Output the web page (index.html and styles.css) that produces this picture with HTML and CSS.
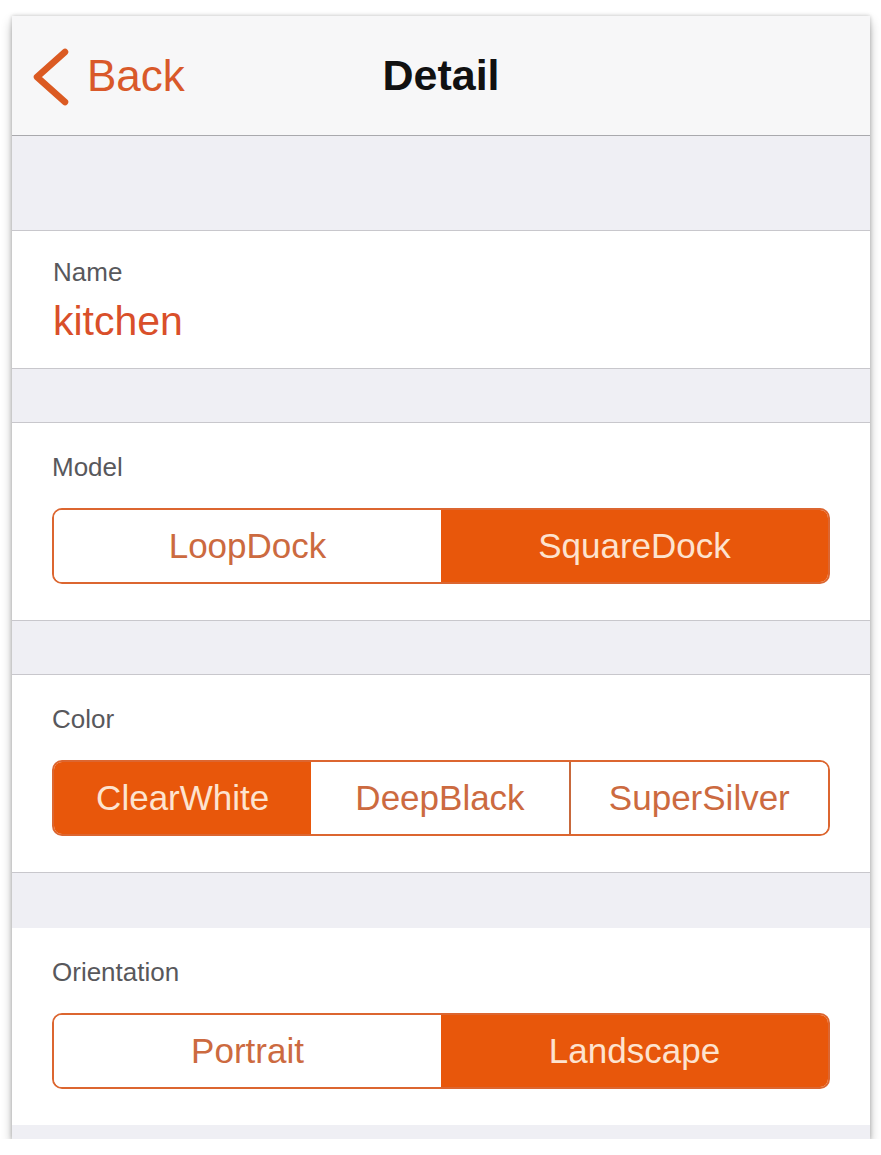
FILE: index.html
```html
<!DOCTYPE html>
<html>
<head>
<meta charset="utf-8">
<link rel="stylesheet" href="styles.css">
</head>
<body>
<div class="phone">
  <header class="navbar">
    <div class="back">
      <svg class="chevron" width="40" height="60" viewBox="0 0 40 60">
        <polyline points="33,5 5,30 33,55" fill="none" stroke="#db5a22" stroke-width="6.5" stroke-linecap="round" stroke-linejoin="round"/>
      </svg>
      <span class="back-text">Back</span>
    </div>
    <div class="title">Detail</div>
  </header>

  <div class="spacer spacer-top"></div>

  <section class="cell name-cell">
    <div class="label">Name</div>
    <div class="value">kitchen</div>
  </section>

  <div class="spacer"></div>

  <section class="cell">
    <div class="label">Model</div>
    <div class="segmented">
      <div class="seg">LoopDock</div>
      <div class="seg selected">SquareDock</div>
    </div>
  </section>

  <div class="spacer"></div>

  <section class="cell">
    <div class="label">Color</div>
    <div class="segmented">
      <div class="seg selected">ClearWhite</div>
      <div class="seg">DeepBlack</div>
      <div class="seg">SuperSilver</div>
    </div>
  </section>

  <div class="spacer spacer-nolines"></div>

  <section class="cell cell-noline">
    <div class="label">Orientation</div>
    <div class="segmented">
      <div class="seg">Portrait</div>
      <div class="seg selected">Landscape</div>
    </div>
  </section>

  <div class="spacer-bottom"></div>
</div>
</body>
</html>
```

FILE: styles.css
```css
html, body {
  margin: 0;
  padding: 0;
  background: #ffffff;
}

body {
  font-family: "Liberation Sans", Arial, Helvetica, sans-serif;
}

.phone {
  margin: 16px 11px 0 12px;
  width: 858px;
  height: 1123px;
  background: #efeff4;
  box-shadow: 0 6px 10px rgba(0, 0, 0, 0.28), 0 0 4px rgba(0, 0, 0, 0.22);
  overflow: hidden;
}

.navbar {
  height: 119px;
  background: #f7f7f8;
  border-bottom: 1px solid #a9a9ad;
  display: flex;
  align-items: center;
  position: relative;
}

.back {
  display: flex;
  align-items: center;
  padding-left: 20px;
  color: #d9592a;
  height: 100%;
}

.chevron {
  display: block;
  margin-top: 2px;
}

.back-text {
  font-size: 44px;
  margin-left: 15px;
  margin-top: 0;
}

.title {
  position: absolute;
  left: 0;
  right: 0;
  top: 0;
  bottom: 0;
  display: flex;
  align-items: center;
  justify-content: center;
  font-size: 43px;
  font-weight: bold;
  color: #111;
  margin-top: 0;
  pointer-events: none;
}

.spacer {
  height: 53px;
  background: #efeff4;
}

.spacer-top {
  height: 94px;
}

.spacer-nolines {
  height: 55px;
}

.cell {
  background: #ffffff;
  border-top: 1px solid #c8c7cc;
  border-bottom: 1px solid #c8c7cc;
  padding: 29px 40px 36px 40px;
}

.cell-noline {
  border-top: none;
  border-bottom: none;
  padding-top: 29px;
}

.name-cell {
  padding: 26px 40px 24px 41px;
}

.label {
  font-size: 26px;
  line-height: 30px;
  color: #58585c;
}

.value {
  font-size: 41px;
  line-height: 46px;
  color: #d94f2a;
  margin-top: 11px;
}

.segmented {
  margin-top: 26px;
  height: 76px;
  box-sizing: border-box;
  border: 2px solid #dc6630;
  border-radius: 10px;
  display: flex;
  overflow: hidden;
}

.seg {
  flex: 1;
  display: flex;
  align-items: center;
  justify-content: center;
  font-size: 35px;
  color: #cc6a40;
  background: #ffffff;
}

.seg + .seg {
  border-left: 2px solid #c8693c;
}

.seg.selected {
  background: #e8570b;
  color: #fde3cf;
}

.seg.selected + .seg,
.seg + .seg.selected {
  border-left: none;
}

.spacer-bottom {
  height: 15px;
  background: #efeff4;
}
```
